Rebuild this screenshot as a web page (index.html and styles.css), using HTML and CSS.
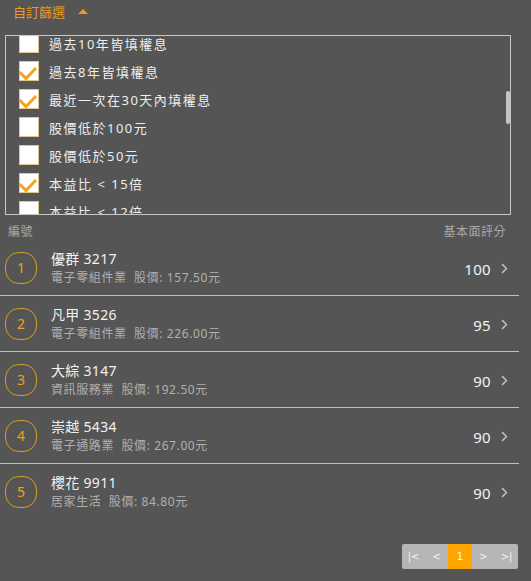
FILE: index.html
```html
<!DOCTYPE html>
<html lang="zh-Hant">
<head>
<meta charset="utf-8">
<link rel="stylesheet" href="styles.css">
</head>
<body>
<div class="page">
  <div class="title">自訂篩選 <span class="tri"></span></div>
  <div class="filter">
    <ul class="checks">
      <li><span class="box"></span><span class="lbl">過去10年皆填權息</span></li>
      <li><span class="box on"><svg viewBox="0 0 20 20"><polyline points="0.5,11 7,17.5 17,7"/></svg></span><span class="lbl">過去8年皆填權息</span></li>
      <li><span class="box on"><svg viewBox="0 0 20 20"><polyline points="0.5,11 7,17.5 17,7"/></svg></span><span class="lbl">最近一次在30天內填權息</span></li>
      <li><span class="box"></span><span class="lbl">股價低於100元</span></li>
      <li><span class="box"></span><span class="lbl">股價低於50元</span></li>
      <li><span class="box on"><svg viewBox="0 0 20 20"><polyline points="0.5,11 7,17.5 17,7"/></svg></span><span class="lbl">本益比 &lt; 15倍</span></li>
      <li><span class="box"></span><span class="lbl">本益比 &lt; 12倍</span></li>
    </ul>
    <div class="thumb"></div>
  </div>
  <div class="head"><span>編號</span><span>基本面評分</span></div>
  <div class="list">
    <div class="row"><div class="badge">1</div><div class="info"><div class="name">優群 3217</div><div class="sub">電子零組件業&nbsp;&nbsp;股價: 157.50元</div></div><div class="score">100</div><svg class="chev" viewBox="0 0 7 11"><polyline points="1,1 5.5,5.5 1,10"/></svg></div>
    <div class="row"><div class="badge">2</div><div class="info"><div class="name">凡甲 3526</div><div class="sub">電子零組件業&nbsp;&nbsp;股價: 226.00元</div></div><div class="score">95</div><svg class="chev" viewBox="0 0 7 11"><polyline points="1,1 5.5,5.5 1,10"/></svg></div>
    <div class="row"><div class="badge">3</div><div class="info"><div class="name">大綜 3147</div><div class="sub">資訊服務業&nbsp;&nbsp;股價: 192.50元</div></div><div class="score">90</div><svg class="chev" viewBox="0 0 7 11"><polyline points="1,1 5.5,5.5 1,10"/></svg></div>
    <div class="row"><div class="badge">4</div><div class="info"><div class="name">崇越 5434</div><div class="sub">電子通路業&nbsp;&nbsp;股價: 267.00元</div></div><div class="score">90</div><svg class="chev" viewBox="0 0 7 11"><polyline points="1,1 5.5,5.5 1,10"/></svg></div>
    <div class="row"><div class="badge">5</div><div class="info"><div class="name">櫻花 9911</div><div class="sub">居家生活&nbsp;&nbsp;股價: 84.80元</div></div><div class="score">90</div><svg class="chev" viewBox="0 0 7 11"><polyline points="1,1 5.5,5.5 1,10"/></svg></div>
  </div>
  <div class="pager-wrap">
    <div class="pager">
      <span class="pg">|&lt;</span><span class="pg">&lt;</span><span class="pg active">1</span><span class="pg">&gt;</span><span class="pg">&gt;|</span>
    </div>
  </div>
</div>
</body>
</html>
```
FILE: styles.css
```css
* { box-sizing: border-box; }
html, body { margin: 0; padding: 0; }
body {
  background: #555555;
  font-family: "Noto Sans", "Noto Sans CJK TC", sans-serif;
  color: #eeeeee;
  width: 531px;
  height: 581px;
  overflow: hidden;
}
.page {
  width: 519px;
}
.title {
  height: 35px;
  padding: 3px 0 0 13px;
  font-size: 13px;
  line-height: 18px;
  color: #eb9a22;
  display: flex;
  align-items: flex-start;
}
.tri {
  display: inline-block;
  width: 0;
  height: 0;
  border-left: 5px solid transparent;
  border-right: 5px solid transparent;
  border-bottom: 5px solid #eb9a22;
  margin: 6px 0 0 13px;
}
.filter {
  position: relative;
  margin-left: 5px;
  width: 506px;
  height: 180px;
  border: 1px solid #c8c8c8;
  overflow: hidden;
}
.checks {
  list-style: none;
  margin: -7px 0 0 0;
  padding: 0 0 0 13px;
}
.checks li {
  height: 28px;
  display: flex;
  align-items: center;
}
.box {
  position: relative;
  width: 20px;
  height: 20px;
  background: #ffffff;
  border: 1px solid #e2c58f;
  flex: none;
}
.box svg {
  position: absolute;
  left: -1px;
  top: -1px;
  width: 20px;
  height: 20px;
  overflow: visible;
}
.box polyline {
  fill: none;
  stroke: #f5a21c;
  stroke-width: 3;
}
.lbl {
  margin-left: 10px;
  font-size: 13px;
  letter-spacing: 1.5px;
  color: #eeeeee;
}
.thumb {
  position: absolute;
  right: 0;
  top: 55px;
  width: 4px;
  height: 33px;
  background: #c4c4c4;
  border-radius: 2px;
}
.head {
  display: flex;
  justify-content: space-between;
  padding: 8px 13px 0 8px;
  height: 25px;
  font-size: 12px;
  line-height: 17px;
  color: #a8a8a8;
  letter-spacing: 0.5px;
}
.row {
  height: 56px;
  display: flex;
  align-items: center;
  border-bottom: 1px solid #bdbdbd;
  padding: 0 11px 0 5px;
}
.row:last-child { border-bottom: none; height: 55px; }
.badge {
  width: 32px;
  height: 32px;
  border: 1.5px solid #d9a01e;
  border-radius: 14px;
  color: #eba21f;
  font-size: 14px;
  display: flex;
  align-items: center;
  justify-content: center;
  flex: none;
}
.info {
  margin-left: 14px;
  padding-top: 2px;
  flex: 1;
}
.name {
  font-size: 14px;
  line-height: 18px;
  color: #f2f2f2;
  letter-spacing: 0.3px;
}
.sub {
  font-size: 12px;
  line-height: 19px;
  color: #b0b0b0;
  letter-spacing: 0.6px;
}
.score {
  font-size: 15px;
  color: #f2f2f2;
  letter-spacing: 0.3px;
  padding-top: 2px;
}
.chev {
  width: 7px;
  height: 11px;
  margin-left: 10px;
  margin-top: 2px;
  flex: none;
}
.chev polyline {
  fill: none;
  stroke: #bdbdbd;
  stroke-width: 1.6;
}
.pager-wrap {
  display: flex;
  justify-content: flex-end;
  padding: 25px 1px 0 0;
}
.pager {
  display: flex;
  background: #b5b5b5;
  border-radius: 2px;
  height: 25px;
}
.pg {
  width: 23px;
  height: 25px;
  display: flex;
  align-items: center;
  justify-content: center;
  font-size: 10px;
  color: #f4f4f4;
  font-family: "DejaVu Sans", sans-serif;
}
.pg.active {
  background: #ffa500;
  width: 24px;
  font-size: 11px;
}
```
